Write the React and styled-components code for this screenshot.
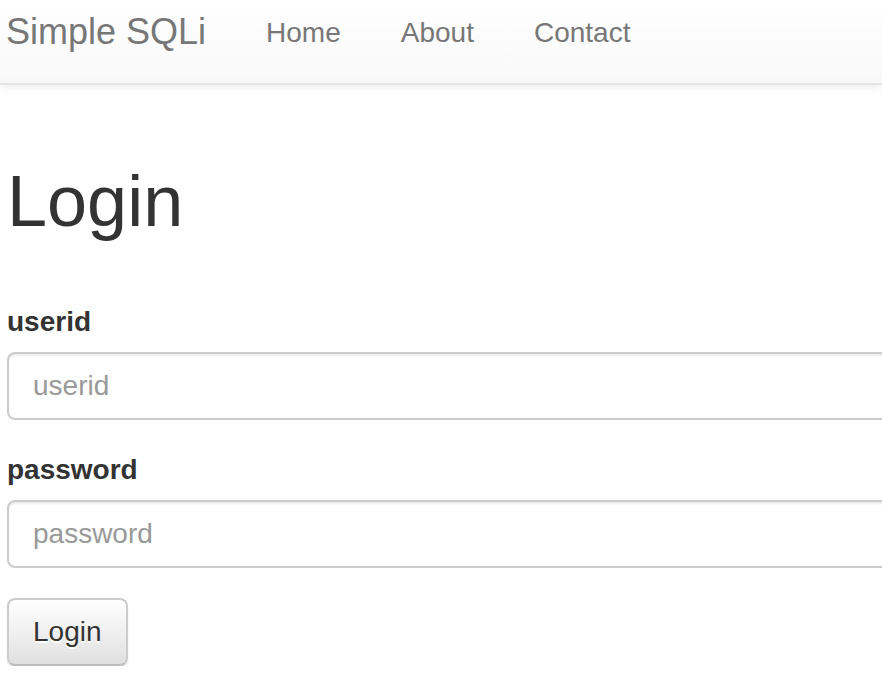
import React from "react";
import styled, { createGlobalStyle } from "styled-components";

const GlobalStyle = createGlobalStyle`
  html, body {
    margin: 0;
    padding: 0;
    overflow-x: hidden;
    background: #fff;
    font-family: "Liberation Sans", Arial, sans-serif;
    color: #333;
  }
  * {
    box-sizing: border-box;
  }
`;

const Navbar = styled.nav`
  display: flex;
  align-items: flex-start;
  height: 85px;
  padding-top: 13px;
  background-image: linear-gradient(to bottom, #ffffff 0%, #f8f8f8 100%);
  border-bottom: 2px solid #e4e4e4;
  box-shadow: inset 0 2px 0 rgba(255, 255, 255, 0.15),
    0 2px 10px rgba(0, 0, 0, 0.075);
`;

const Brand = styled.a`
  font-size: 36px;
  line-height: 40px;
  color: #777;
  text-decoration: none;
  padding: 0 30px 0 6px;
  margin-top: -1px;
`;

const NavLink = styled.a`
  font-size: 28px;
  line-height: 40px;
  color: #777;
  text-decoration: none;
  padding: 0 30px;
`;

const Container = styled.main`
  width: 940px;
  padding-left: 7px;
`;

const Title = styled.h1`
  font-size: 72px;
  font-weight: 500;
  line-height: 79px;
  margin: 77px 0 61px;
  color: #333;
`;

const FormGroup = styled.div`
  margin-bottom: 30px;
`;

const Label = styled.label`
  display: block;
  font-size: 28px;
  font-weight: bold;
  line-height: 40px;
  margin-bottom: 10px;
  color: #333;
`;

const Input = styled.input`
  display: block;
  width: 100%;
  height: 68px;
  padding: 12px 24px;
  font-family: inherit;
  font-size: 28px;
  line-height: 40px;
  color: #555;
  background: #fff;
  border: 2px solid #ccc;
  border-radius: 8px;
  box-shadow: inset 0 2px 2px rgba(0, 0, 0, 0.075);
  outline: none;
  &::placeholder {
    color: #999;
  }
`;

const Button = styled.button`
  height: 68px;
  padding: 12px 24px;
  font-family: inherit;
  font-size: 28px;
  line-height: 40px;
  color: #333;
  background-image: linear-gradient(to bottom, #ffffff 0%, #e0e0e0 100%);
  border: 2px solid #ccc;
  border-bottom-color: #bdbdbd;
  border-radius: 8px;
  text-shadow: 0 2px 0 #fff;
  box-shadow: inset 0 2px 0 rgba(255, 255, 255, 0.15),
    0 2px 2px rgba(0, 0, 0, 0.075);
  cursor: pointer;
`;

const App = () => {
  return (
    <>
      <GlobalStyle />
      <Navbar>
        <Brand href="#">Simple SQLi</Brand>
        <NavLink href="#">Home</NavLink>
        <NavLink href="#">About</NavLink>
        <NavLink href="#">Contact</NavLink>
      </Navbar>
      <Container>
        <Title>Login</Title>
        <form onSubmit={(e) => e.preventDefault()}>
          <FormGroup>
            <Label htmlFor="userid">userid</Label>
            <Input id="userid" name="userid" placeholder="userid" />
          </FormGroup>
          <FormGroup>
            <Label htmlFor="password">password</Label>
            <Input
              id="password"
              name="password"
              type="password"
              placeholder="password"
            />
          </FormGroup>
          <Button type="submit">Login</Button>
        </form>
      </Container>
    </>
  );
};

export default App;
